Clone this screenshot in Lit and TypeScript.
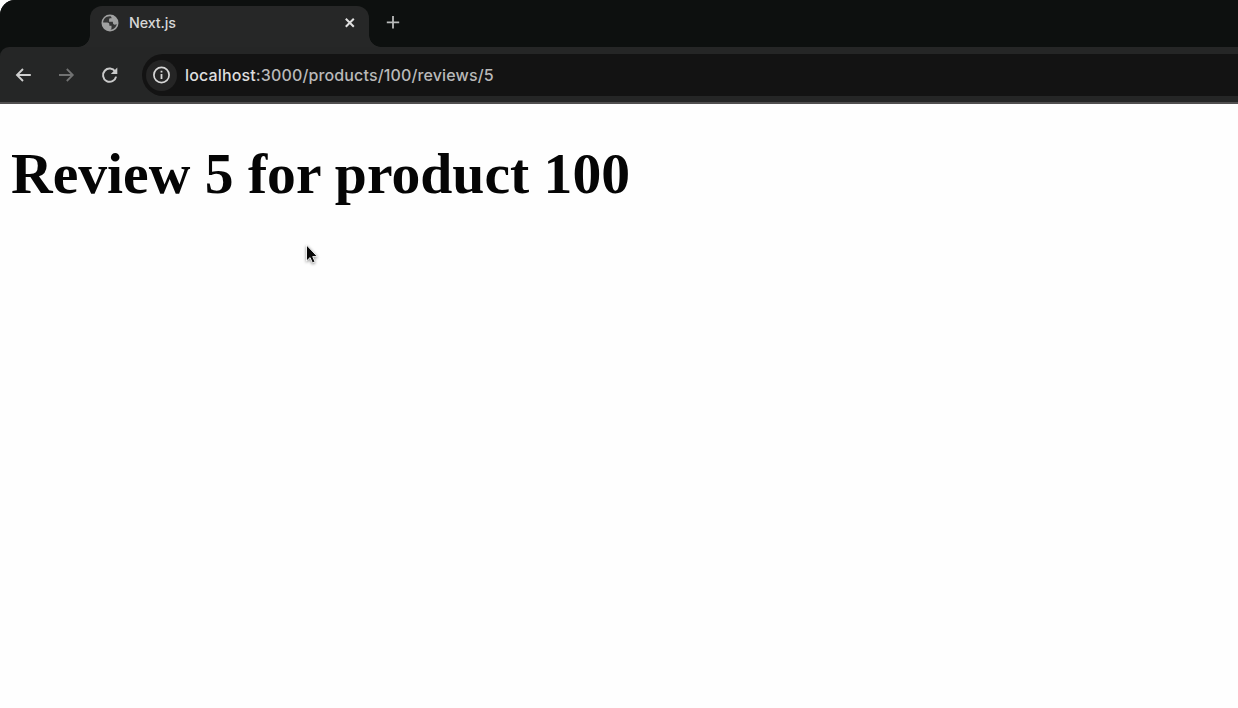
import { LitElement, html, css } from "lit";
import { customElement } from "lit/decorators.js";

@customElement("browser-tabs")
class BrowserTabs extends LitElement {
  static styles = css`
    :host { display: flex; height: 47px; background: #0d100f; padding-left: 90px; box-sizing: border-box; font-family: Inter, "Liberation Sans", sans-serif; border-top-left-radius: 15px; }
    .tab { position: relative; box-sizing: border-box; width: 279px; height: 41px; margin-top: 6px; border-radius: 12px 12px 0 0; background: #262727; display: flex; align-items: center; padding: 0 12px 7px 11px; }
    .flare { position: absolute; bottom: 0; width: 12px; height: 12px; }
    .left { left: -12px; background: radial-gradient(circle at 0 0, transparent 11.5px, #262727 12.2px); }
    .right { right: -12px; background: radial-gradient(circle at 100% 0, transparent 11.5px, #262727 12.2px); }
    .title { flex: 1; margin-left: 10px; color: #d7d7d7; font-size: 14.3px; font-weight: 500; line-height: 20px; letter-spacing: -0.1px; }
    svg { display: block; flex: none; }
    .plus { margin: 15px 0 0 16px; }
  `;
  render() {
    return html`
      <div class="tab">
        <span class="flare left"></span><span class="flare right"></span>
        <svg width="18" height="18" viewBox="0 0 18 18">
          <circle cx="9" cy="9" r="8.5" fill="#a0a1a1"></circle>
          <path d="M8.6 2.2C5 2.2 2.2 5 2.1 8.6h4.1c1.4 0 2.2.9 2.2 2.1v1.1h2.1v2.1c0 .8-.5 1.5-1.4 1.8 3.5 0 6.2-2.4 6.6-5.7-.5.5-1.1.7-1.9.7-1.2 0-1.9-.8-1.9-1.9V7.7H8.1V5.6c0-.8.6-1.3 1.3-1.3h1.2c0-.8-.3-1.5-.9-2z" fill="#343535"></path>
        </svg>
        <span class="title">Next.js</span>
        <svg width="14" height="14" viewBox="0 0 14 14"><path d="M2.8 2.8l8 8M10.8 2.8l-8 8" stroke="#e0e0e0" stroke-width="2"></path></svg>
      </div>
      <svg class="plus" width="16" height="16" viewBox="0 0 16 16"><path d="M1.8 7.3h12.4M8 1.1v12.4" stroke="#b8baba" stroke-width="1.8"></path></svg>
    `;
  }
}

@customElement("browser-toolbar")
class BrowserToolbar extends LitElement {
  static styles = css`
    :host { display: flex; box-sizing: border-box; height: 57px; padding: 7px 0 8px 14px; background: #252626; border-bottom: 2px solid #514f50; border-top-left-radius: 9px; font-family: Inter, "Liberation Sans", sans-serif; }
    .nav { display: flex; gap: 24px; height: 42px; align-items: center; width: 128px; flex: none; }
    svg { display: block; flex: none; }
    .address { flex: 1; height: 42px; display: flex; align-items: center; box-sizing: border-box; background: #131313; border-radius: 21px 0 0 21px; padding-left: 4px; }
    .info { width: 31px; height: 31px; border-radius: 50%; background: #252525; display: grid; place-items: center; }
    .url { margin-left: 8px; color: #b9b9b9; font-size: 16px; font-weight: 500; line-height: 24px; letter-spacing: 0.14px; white-space: nowrap; }
    .host { color: #dedede; }
  `;
  render() {
    return html`
      <div class="nav">
        <svg width="19" height="18" viewBox="0 0 19 18"><path d="M16.8 9H3M9 3L3 9l6 6" fill="none" stroke="#cfcfcf" stroke-width="1.9"></path></svg>
        <svg width="19" height="18" viewBox="0 0 19 18"><path d="M2 9h13.8M9.8 3l6 6-6 6" fill="none" stroke="#717272" stroke-width="1.8"></path></svg>
        <svg width="18" height="18" viewBox="0 0 18 18"><path d="M15.2 5.6A6.6 6.6 0 1 0 16.1 10.6" fill="none" stroke="#c9c9c9" stroke-width="2"></path><path d="M17.3 1.5v6.6h-6.5z" fill="#c9c9c9"></path></svg>
      </div>
      <div class="address">
        <span class="info"><svg width="18" height="18" viewBox="0 0 18 18"><circle cx="8.5" cy="9" r="7.6" fill="none" stroke="#d6d6d6" stroke-width="1.7"></circle><path d="M8.5 8v5M8.5 4.8v1.8" stroke="#d6d6d6" stroke-width="1.8"></path></svg></span>
        <span class="url"><span class="host">localhost</span>:3000/products/100/reviews/5</span>
      </div>
    `;
  }
}

@customElement("app-root")
class AppRoot extends LitElement {
  static styles = css`
    :host { display: block; position: relative; height: 708px; overflow: hidden; background: #fefefe; }
    .chrome { background: #0d100f; border-top-left-radius: 15px; }
    h1 { margin: 0; padding: 37px 0 0 11px; font: bold 57.65px/66px "Liberation Serif", "Times New Roman", serif; color: #050505; white-space: nowrap; }
    .cursor { position: absolute; left: 302px; top: 241px; filter: drop-shadow(0 1px 1.5px #0007); }
  `;
  render() {
    return html`
      <div class="chrome"><browser-tabs></browser-tabs><browser-toolbar></browser-toolbar></div>
      <h1>Review 5 for product 100</h1>
      <svg class="cursor" width="20" height="26" viewBox="0 0 20 26"><path d="M4.5 4v16l3.6-3.4 2.3 5.3 2.6-1.1-2.3-5.2h4.7z" fill="#080808" stroke="#fff" stroke-width=".9"></path></svg>
    `;
  }
}
